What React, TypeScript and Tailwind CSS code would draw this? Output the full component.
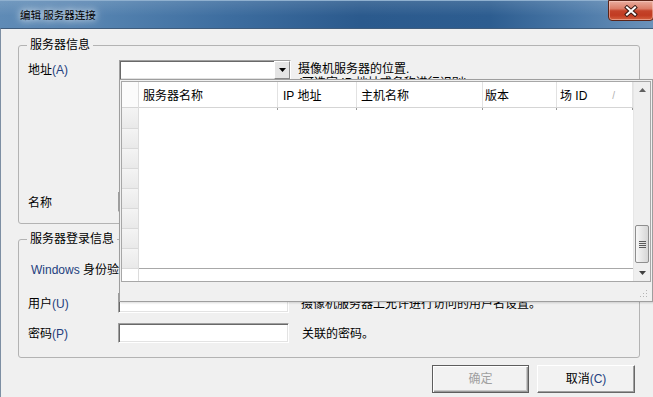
import React from "react";

const sunken =
  "bg-white border border-t-[#a0a0a0] border-l-[#a0a0a0] border-r-white border-b-white shadow-[inset_1px_1px_0_#696969,inset_-1px_-1px_0_#e3e3e3]";

function DownArrow({ color = "#000" }: { color?: string }) {
  return (
    <svg width="7" height="4" viewBox="0 0 7 4">
      <path d="M0 0h7L3.5 4z" fill={color} />
    </svg>
  );
}

function UpArrow({ color = "#000" }: { color?: string }) {
  return (
    <svg width="7" height="4" viewBox="0 0 7 4">
      <path d="M0 4h7L3.5 0z" fill={color} />
    </svg>
  );
}

const cols = [
  { w: "w-[139px]", pl: "pl-[4px]", label: "服务器名称" },
  { w: "w-[79px]", pl: "pl-[5px]", label: "IP 地址" },
  { w: "w-[126px]", pl: "pl-[4px]", label: "主机名称" },
  { w: "w-[74px]", pl: "pl-[2px]", label: "版本" },
  { w: "w-[76px]", pl: "pl-[3px]", label: "场 ID" },
];

function Popup() {
  return (
    <div className="absolute left-[119px] top-[79px] w-[534px] h-[223px] border border-[#9e9e9e] bg-[#f0f0f0] p-px flex flex-col shadow-[1px_1px_2px_rgba(0,0,0,0.15)]">
      <div className="h-[201px] shrink-0 border border-[#a7a7a7] bg-white flex">
        {/* row header column */}
        <div className="w-[17px] shrink-0 flex flex-col border-r border-[#dcdcdc]">
          <div className="h-[26px] shrink-0 bg-[#fbfbfb] border-b border-[#d5d5d5]" />
          <div className="h-[21px] shrink-0 bg-[linear-gradient(#f4f4f4,#e9e9e9)] border-b border-[#d9d9d9]" />
          {[0, 1, 2, 3, 4, 5, 6].map((i) => (
            <div
              key={i}
              className="h-[20px] shrink-0 bg-[linear-gradient(#f4f4f4,#e9e9e9)] border-b border-[#d9d9d9]"
            />
          ))}
          <div className="flex-1 bg-white" />
        </div>
        {/* data area */}
        <div className="w-[494px] shrink-0 flex flex-col">
          <div className="h-[26px] shrink-0 flex border-b border-[#d5d5d5] bg-white">
            {cols.map((c, i) => (
              <div
                key={i}
                className={
                  c.w +
                  " " +
                  c.pl +
                  " h-full flex items-center pt-[3px] border-r border-[#e2e2e2] leading-[14px]"
                }
              >
                <span>{c.label}</span>
                {i === 4 && (
                  <span className="ml-auto mr-[17px] text-[10px] text-[#b0b0b0]">/</span>
                )}
              </div>
            ))}
          </div>
          <div className="h-[161px] shrink-0 border-b border-[#a8a8a8] flex flex-col">
            <div className="h-[2px] flex">
              {cols.map((c, i) => (
                <div key={i} className={c.w + " h-full border-r border-[#9a9a9a]"} />
              ))}
            </div>
          </div>
          <div className="flex-1 bg-white" />
        </div>
        {/* scrollbar */}
        <div className="w-[17px] shrink-0 flex flex-col bg-[#efefef] border-l border-[#e6e6e6]">
          <div className="h-[17px] shrink-0 flex items-center justify-center pb-[2px]">
            <UpArrow color="#606060" />
          </div>
          <div className="flex-1 flex flex-col items-center">
            <div className="mt-[126px] w-[14px] h-[38px] rounded-[2px] border border-[#8e8e8e] bg-[linear-gradient(90deg,#f7f7f7,#e6e6e6_50%,#d6d6d6)] flex flex-col items-center justify-center gap-[1px]">
              <div className="w-[7px] h-px bg-[#5a5a5a]" />
              <div className="w-[7px] h-px bg-[#5a5a5a]" />
              <div className="w-[7px] h-px bg-[#5a5a5a]" />
              <div className="w-[7px] h-px bg-[#5a5a5a]" />
            </div>
          </div>
          <div className="h-[17px] shrink-0 flex items-center justify-center pt-[1px]">
            <DownArrow color="#404040" />
          </div>
        </div>
      </div>
      {/* grip strip */}
      <div className="flex-1 flex justify-end items-end pr-[3px] pb-[2px]">
        <svg width="8" height="8" viewBox="0 0 8 8">
          <g fill="#b5b5b5">
            <rect x="6" y="0" width="1" height="1" />
            <rect x="6" y="3" width="1" height="1" />
            <rect x="3" y="3" width="1" height="1" />
            <rect x="6" y="6" width="1" height="1" />
            <rect x="3" y="6" width="1" height="1" />
            <rect x="0" y="6" width="1" height="1" />
          </g>
        </svg>
      </div>
    </div>
  );
}

export default function App() {
  return (
    <div className="w-[653px] h-[397px] overflow-hidden relative flex flex-col bg-[#f0f0f0] text-[12px] text-black font-['Liberation_Sans','Noto_Sans_CJK_SC',sans-serif]">
      {/* title bar */}
      <div className="h-[28px] shrink-0 relative flex items-center pl-[20px] pt-px border-t border-[#8fb0cf] bg-[linear-gradient(180deg,rgba(255,255,255,0.12),rgba(255,255,255,0)_55%),linear-gradient(90deg,#5f8bb6,#5583b0_15%,#3d6d9f_35%,#2b5a8d_55%,#2d5d90_75%,#4a78a7_88%,#6b92ba)]">
        <span className="text-[10.5px] leading-[12px] text-black font-['Noto_Sans_CJK_SC',sans-serif] [text-shadow:0_0_6px_rgba(255,255,255,0.95),0_0_12px_rgba(255,255,255,0.7)]">
          编辑 服务器连接
        </span>
        <div className="absolute right-[-1px] top-[-1px] w-[46px] h-[21px] rounded-b-[4px] border border-[#5b2418] bg-[linear-gradient(180deg,#e9ad9f,#db7d68_40%,#c4432a_52%,#c13b22_75%,#d3603f)] shadow-[inset_0_0_0_1px_rgba(255,220,210,0.45)] flex items-center justify-center">
          <svg width="14" height="12" viewBox="0 0 14 12">
            <path
              d="M3 2.5 L11 9.5 M11 2.5 L3 9.5"
              stroke="#3a1a14"
              strokeWidth="4"
              strokeLinecap="square"
            />
            <path
              d="M3 2.5 L11 9.5 M11 2.5 L3 9.5"
              stroke="#ffffff"
              strokeWidth="2"
              strokeLinecap="square"
            />
          </svg>
        </div>
      </div>

      {/* body */}
      <div className="flex-1 flex flex-col border-t border-l border-t-[#3f5c7c] border-l-[#7d8fa3] pl-[17px]">
        {/* server info group */}
        <fieldset className="w-[622px] mt-[8px] border border-[#b3b3b3] rounded-[3px] pl-[9px] pt-[6px] pb-[11px]">
          <legend className="-ml-px px-[3px] leading-[17px]">服务器信息</legend>
          <div className="flex items-start">
            <div className="w-[91px] h-[20px] flex items-center leading-[14px]">
              地址<span className="text-[#24407e]">(A)</span>
            </div>
            <div className={"w-[172px] h-[20px] flex justify-end " + sunken}>
              <div className="w-[16px] h-full bg-[#e4e4e4] border border-t-white border-l-white border-r-[#8a8a8a] border-b-[#8a8a8a] flex items-center justify-center">
                <DownArrow />
              </div>
            </div>
            <div className="ml-[7px] pt-[2px] leading-[14px]">
              摄像机服务器的位置.
              <br />
              (可选定 IP 地址或名称进行识别)
            </div>
          </div>
          <div className="flex items-start mt-[102px]">
            <div className="w-[90px] pt-[4px] leading-[14px]">名称</div>
            <div className={"w-[300px] h-[20px] " + sunken} />
          </div>
        </fieldset>

        {/* login info group */}
        <fieldset className="w-[622px] mt-[7px] border border-[#b3b3b3] rounded-[3px] pl-[9px] pt-[13px] pb-[14px]">
          <legend className="-ml-px px-[3px] leading-[16px]">服务器登录信息</legend>
          <div className="h-[20px] flex items-center pl-[3px] leading-[14px]">
            <span className="text-[#24407e]">Windows</span>&nbsp;身份验证<span className="text-[#24407e]">(W)</span>
          </div>
          <div className="flex items-start mt-[13px]">
            <div className="w-[90px] pt-[4px] leading-[14px]">
              用户<span className="text-[#24407e]">(U)</span>
            </div>
            <div className={"w-[171px] h-[20px] " + sunken} />
            <div className="ml-[12px] pt-[4px] leading-[14px]">摄像机服务器上允许进行访问的用户名设置。</div>
          </div>
          <div className="flex items-start mt-[10px]">
            <div className="w-[90px] pt-[4px] leading-[14px]">
              密码<span className="text-[#24407e]">(P)</span>
            </div>
            <div className={"w-[171px] h-[20px] " + sunken} />
            <div className="ml-[13px] pt-[4px] leading-[14px]">关联的密码。</div>
          </div>
        </fieldset>

        {/* buttons */}
        <div className="flex justify-end gap-[8px] pr-[18px] mt-[7px]">
          <div className="w-[97px] h-[28px] border border-[#5e5e5e] bg-[#f2f2f2] shadow-[inset_1px_1px_0_#ffffff,inset_-1px_-1px_0_#9a9a9a,inset_-2px_-2px_0_#c8c8c8] flex items-center justify-center text-[#a0a0a0] leading-[14px]">
            确定
          </div>
          <div className="w-[98px] h-[28px] border border-t-white border-l-white border-r-[#696969] border-b-[#696969] bg-[#f2f2f2] shadow-[inset_-1px_-1px_0_#a0a0a0] flex items-center justify-center leading-[14px]">
            取消<span className="text-[#24407e]">(C)</span>
          </div>
        </div>
      </div>

      <Popup />
    </div>
  );
}
